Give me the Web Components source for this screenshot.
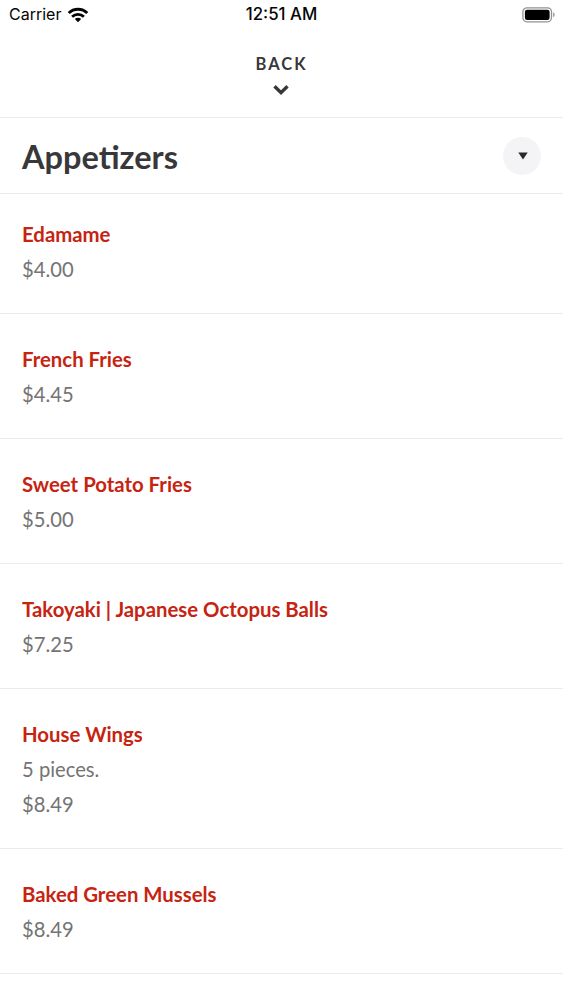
<!DOCTYPE html>
<html lang="en">
<head>
<meta charset="utf-8">
<meta name="viewport" content="width=device-width, initial-scale=1">
<title>Appetizers</title>
<style>
  body {
    margin: 0;
    background: #fff;
    font-family: Lato, "Open Sans", sans-serif;
    color: #38383a;
  }
</style>
</head>
<body>
<menu-screen></menu-screen>

<script>
(() => {
  /**
   * Attach a template made from the given markup as an open shadow root
   */
  const render = (element, html) => {
    const template = document.createElement('template');
    template.innerHTML = html;
    element.attachShadow({ mode: 'open' })
      .appendChild(template.content.cloneNode(true));
  };

  customElements.define('status-bar',
    /**
     * Carrier, time and battery
     */
    class StatusBar extends HTMLElement {
      constructor () {
        super();
        render(this, `
          <style>
            :host {
              display: grid;
              grid-template-columns: 1fr auto 1fr;
              align-items: center;
              height: 29px;
              padding: 0 7px 0 9px;
              box-sizing: border-box;
              font: 16px/29px Inter, "Liberation Sans", sans-serif;
              color: #050505;
            }
            .carrier { display: flex; align-items: center; gap: 6px; }
            .time { font-size: 16.8px; font-weight: 500; margin: 0 2px 0 0; }
            .battery { justify-self: end; }
            svg { display: block; }
          </style>
          <div class="carrier">
            <span class="name">Carrier</span>
            <svg width="22" height="16" viewBox="0 0 22 16" fill="none" stroke="currentColor" stroke-width="2.8">
              <path d="M1.7 6.1a13.2 13.2 0 0 1 18.6 0"/>
              <path d="M5.1 9.8a8.4 8.4 0 0 1 11.8 0"/>
              <path d="M11 15.3L7.8 12.1a4.6 4.6 0 0 1 6.4 0z" fill="currentColor" stroke="none"/>
            </svg>
          </div>
          <span class="time"><slot></slot></span>
          <svg class="battery" width="34" height="16" viewBox="0 0 34 16">
            <rect x=".9" y=".8" width="28.6" height="14" rx="4" fill="none" stroke="#929292" stroke-width="1.3"/>
            <rect x="2.9" y="2.7" width="24.7" height="10.2" rx="2.2" fill="#000"/>
            <path d="M31.2 5.3c1.9.8 1.9 4.2 0 5z" fill="#929292"/>
          </svg>
        `);
      }
    }
  );

  customElements.define('back-button',
    /**
     * Label with a chevron below it
     */
    class BackButton extends HTMLElement {
      constructor () {
        super();
        render(this, `
          <style>
            :host {
              display: flex;
              flex-direction: column;
              align-items: center;
              height: 89px;
              padding: 25px 2px 0 0;
              box-sizing: border-box;
              border-bottom: 1px solid #ebebeb;
            }
            span {
              font-size: 16.5px;
              font-weight: 700;
              line-height: 20px;
              letter-spacing: 2px;
              margin-right: -2px;
            }
            svg { display: block; margin-top: 10px; }
          </style>
          <span><slot></slot></span>
          <svg width="18" height="12" viewBox="0 0 18 12" fill="none" stroke="currentColor" stroke-width="3.4">
            <path d="M2.5 2.200L9 8.700l6.500-6.500"/>
          </svg>
        `);
      }
    }
  );

  customElements.define('section-header',
    /**
     * Menu section title with a round toggle
     */
    class SectionHeader extends HTMLElement {
      constructor () {
        super();
        render(this, `
          <style>
            :host {
              display: flex;
              align-items: center;
              justify-content: space-between;
              height: 76px;
              padding: 0 22px;
              box-sizing: border-box;
              border-bottom: 1px solid #ebebeb;
            }
            h1 { margin: 2px 0 0; font-size: 32.5px; line-height: 40px; font-weight: 700; }
            .toggle {
              display: grid;
              place-items: center;
              width: 38px;
              height: 38px;
              border-radius: 50%;
              background: #f4f3f5;
            }
            svg { margin: 1px 0 0 1px; }
          </style>
          <h1><slot></slot></h1>
          <div class="toggle">
            <svg width="10" height="8" viewBox="0 0 10 8"><path d="M.3.5h9.4L5 7.500z" fill="#29292b"/></svg>
          </div>
        `);
      }
    }
  );

  customElements.define('menu-item',
    /**
     * Dish name with its details and price
     */
    class MenuItem extends HTMLElement {
      constructor () {
        super();
        render(this, `
          <style>
            :host {
              display: block;
              padding: 28px 22px 26px;
              border-bottom: 1px solid #ebebeb;
              font-size: 20.2px;
              line-height: 35px;
              color: #747474;
            }
            :host(:first-of-type) { padding-top: 23px; }
            .name { font-size: 20.35px; font-weight: 700; color: #c62411; }
            ::slotted(*) { display: block; }
          </style>
          <div class="name"><slot name="name"></slot></div>
          <slot></slot>
        `);
      }
    }
  );

  customElements.define('menu-screen',
    /**
     * The whole screen
     */
    class MenuScreen extends HTMLElement {
      constructor () {
        super();
        const items = [
          ['Edamame', '$4.00'],
          ['French Fries', '$4.45'],
          ['Sweet Potato Fries', '$5.00'],
          ['Takoyaki | Japanese Octopus Balls', '$7.25'],
          ['House Wings', '5 pieces.', '$8.49'],
          ['Baked Green Mussels', '$8.49'],
        ];

        render(this, `
          <style>
            :host { display: block; height: 1000px; overflow: hidden; }
          </style>
          <status-bar>12:51 AM</status-bar>
          <back-button>BACK</back-button>
          <section-header>Appetizers</section-header>
          <main>
            ${items.map(([name, ...lines]) => `<menu-item>
              <span slot="name">${name}</span>
              ${lines.map(line => `<span>${line}</span>`).join('')}
            </menu-item>`).join('')}
          </main>
        `);
      }
    }
  );
})();
</script>
</body>
</html>
